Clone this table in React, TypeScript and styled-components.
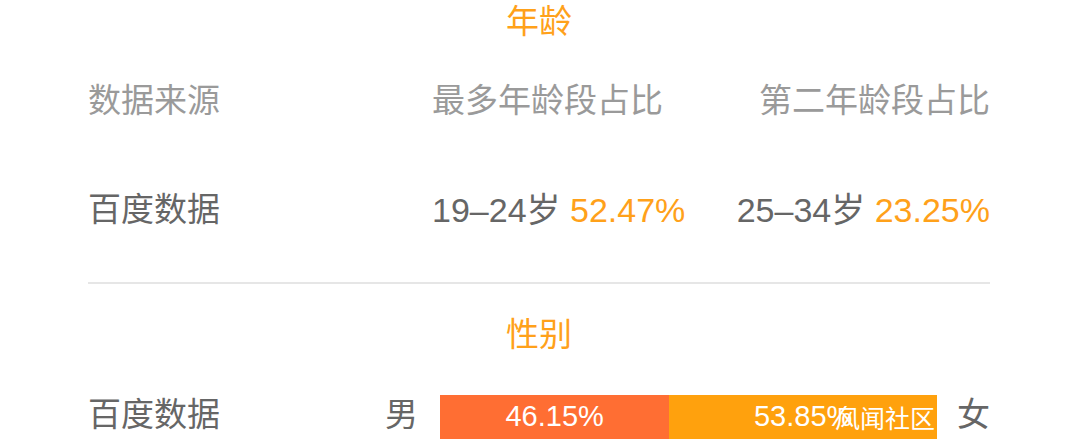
import React, { FunctionComponent } from 'react';
import styled, { createGlobalStyle } from 'styled-components';

const GlobalStyle = createGlobalStyle`
  html, body {
    margin: 0;
    padding: 0;
    background: #fff;
  }
  body {
    font-family: 'Liberation Sans', 'Noto Sans CJK SC', sans-serif;
    -webkit-font-smoothing: antialiased;
  }
`;

const ORANGE = '#ffa11a';

const ageRows = [
  { source: '百度数据', first: '19–24岁', firstPct: '52.47%', second: '25–34岁', secondPct: '23.25%' },
];

const App: FunctionComponent = () => {
  const male = 46.15;
  const female = 53.85;

  return (
    <Container>
      <GlobalStyle />
      <SectionTitle>年龄</SectionTitle>

      <AgeTable>
        <HeadCell>数据来源</HeadCell>
        <HeadCell>最多年龄段占比</HeadCell>
        <HeadCell align="right">第二年龄段占比</HeadCell>
      </AgeTable>

      {ageRows.map((row) => (
        <AgeTable key={row.source} className="data">
          <Cell>{row.source}</Cell>
          <Value>
            {row.first} <Pct>{row.firstPct}</Pct>
          </Value>
          <Value align="right">
            {row.second} <Pct>{row.secondPct}</Pct>
          </Value>
        </AgeTable>
      ))}

      <Divider />

      <SectionTitle className="gender">性别</SectionTitle>

      <GenderRow>
        <Cell>百度数据</Cell>
        <GenderGroup>
          <Cell>男</Cell>
          <Bar>
            <Segment color="#ff6e33" style={{ width: `${male}%` }}>
              {male.toFixed(2)}%
            </Segment>
            <Segment color="#ffa10d" style={{ width: `${female}%` }}>
              {female.toFixed(2)}%
            </Segment>
            <Watermark>风闻社区</Watermark>
          </Bar>
          <Cell className="female">女</Cell>
        </GenderGroup>
      </GenderRow>
    </Container>
  );
};

const Container = styled.div`
  width: 1080px;
  height: 444px;
  overflow: hidden;
  box-sizing: border-box;
  padding: 0 90px 0 88px;
  font-size: 34px;
`;

const SectionTitle = styled.div`
  text-align: center;
  color: ${ORANGE};
  font-size: 33px;
  line-height: 44px;
  height: 44px;
  &.gender {
    margin-top: 29px;
  }
`;

const AgeTable = styled.div`
  display: grid;
  grid-template-columns: 344px 1fr 1fr;
  align-items: center;
  height: 44px;
  margin-top: 35px;
  &.data {
    margin-top: 65px;
  }
`;

const HeadCell = styled.div<{ align?: string }>`
  color: #9a9a9a;
  font-size: 33px;
  line-height: 44px;
  white-space: nowrap;
  text-align: ${(p) => p.align || 'left'};
`;

const Cell = styled.div<{ align?: string }>`
  color: #666;
  font-size: 33px;
  line-height: 44px;
  white-space: nowrap;
  text-align: ${(p) => p.align || 'left'};
  &.female {
    margin-left: -2px;
  }
`;

const Value = styled(Cell)`
  font-size: 34px;
`;

const Pct = styled.span`
  color: ${ORANGE};
`;

const Divider = styled.div`
  height: 2px;
  background-color: #e6e6e6;
  margin-top: 50px;
`;

const GenderRow = styled.div`
  display: flex;
  justify-content: space-between;
  align-items: center;
  margin-top: 34px;
  height: 48px;
`;

const GenderGroup = styled.div`
  display: flex;
  align-items: center;
  gap: 22px;
`;

const Bar = styled.div`
  position: relative;
  display: flex;
  width: 497px;
  height: 44px;
  margin-top: 3px;
`;

const Segment = styled.div<{ color: string }>`
  display: flex;
  align-items: center;
  justify-content: center;
  background-color: ${(p) => p.color};
  color: #fff;
  font-size: 29px;
`;

const Watermark = styled.div`
  position: absolute;
  right: 2px;
  top: 5px;
  color: #fff;
  font-family: 'Noto Sans CJK SC', sans-serif;
  font-size: 25px;
  line-height: 34px;
`;

export default App;
